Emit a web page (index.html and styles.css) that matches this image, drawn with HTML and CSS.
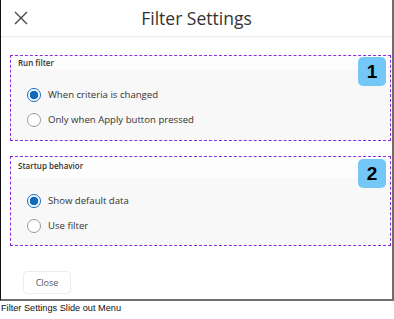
FILE: index.html
```html
<!DOCTYPE html>
<html lang="en">
<head>
    <meta charset="UTF-8">
    <title>Filter Settings</title>
    <link rel="stylesheet" href="styles.css">
</head>
<body>
    <div class="frame">
        <div class="header">
            <span class="close-x">
                <svg width="14" height="14" viewBox="0 0 14 14">
                    <path d="M1 1 L13 13 M13 1 L1 13" stroke="#444" stroke-width="1.3" fill="none"/>
                </svg>
            </span>
            <h1 class="title">Filter Settings</h1>
            <span></span>
        </div>

        <div class="section first">
            <div class="section-label">Run filter</div>
            <div class="section-body">
                <label class="option"><span class="radio checked"></span>When criteria is changed</label>
                <label class="option"><span class="radio"></span>Only when Apply button pressed</label>
            </div>
            <span class="badge">1</span>
        </div>

        <div class="section second">
            <div class="section-label">Startup behavior</div>
            <div class="section-body">
                <label class="option"><span class="radio checked"></span>Show default data</label>
                <label class="option"><span class="radio"></span>Use filter</label>
            </div>
            <span class="badge">2</span>
        </div>

        <div class="footer">
            <button type="button" class="close-btn">Close</button>
        </div>
    </div>
    <p class="caption">Filter Settings Slide out Menu</p>
</body>
</html>
```

FILE: styles.css
```css
body {
    margin: 0;
    background: #fff;
    font-family: "Open Sans", sans-serif;
    color: #333;
}
.frame {
    width: 391px;
    height: 299px;
    border-left: 1px solid #111;
    border-right: 2px solid #6e6e6e;
    border-bottom: 2px solid #6e6e6e;
    display: flex;
    flex-direction: column;
}
.header {
    height: 36px;
    display: grid;
    grid-template-columns: 1fr auto 1fr;
    align-items: center;
    border-bottom: 1px solid #ececec;
    box-shadow: 0 1px 2px rgba(0, 0, 0, 0.04);
}
.close-x {
    padding-left: 13px;
    display: flex;
}
.title {
    margin: 0;
    font-size: 17.5px;
    font-weight: 400;
    color: #333;
}
.section {
    position: relative;
    margin: 18px 1px 0 9px;
    border: 1px dashed #8a2be2;
}
.section.second {
    margin-top: 15px;
}
.section-label {
    height: 13px;
    padding: 1px 0 0 7px;
    font-size: 8px;
    font-weight: 600;
    color: #333;
    background: #fdfdfd;
}
.second .section-label {
    height: 18px;
    padding-top: 3px;
}
.section-body {
    background: #f8f8f8;
    padding: 12px 0 8px 16px;
}
.second .section-body {
    padding-top: 10px;
    padding-bottom: 7px;
}
.option {
    height: 25px;
    display: flex;
    align-items: center;
    font-size: 9.6px;
    color: #333;
}
.radio {
    width: 12px;
    height: 12px;
    border: 1px solid #999;
    border-radius: 50%;
    background: #fff;
    margin-right: 7px;
    box-sizing: content-box;
}
.radio.checked {
    border-color: #0f6cbd;
    background: radial-gradient(circle, #0f6cbd 0 4px, #fff 4.6px);
}
.badge {
    position: absolute;
    top: 1px;
    right: 4px;
    width: 28px;
    height: 29px;
    border-radius: 5px;
    background: #73c8f7;
    color: #000;
    font-family: "Liberation Sans", Arial, sans-serif;
    font-weight: 700;
    font-size: 19px;
    display: flex;
    align-items: center;
    justify-content: center;
}
.second .badge {
    top: 2px;
}
.footer {
    padding: 23px 0 0 22px;
}
.close-btn {
    width: 48px;
    height: 23px;
    background: #fff;
    border: 1px solid #ececec;
    border-radius: 4px;
    font-family: "Open Sans", sans-serif;
    font-size: 9px;
    color: #555;
    padding: 0;
}
.caption {
    margin: 0;
    padding: 2px 0 0 1px;
    font-family: "Liberation Sans", Arial, sans-serif;
    font-size: 9.2px;
    line-height: 11px;
    color: #111;
}
```
